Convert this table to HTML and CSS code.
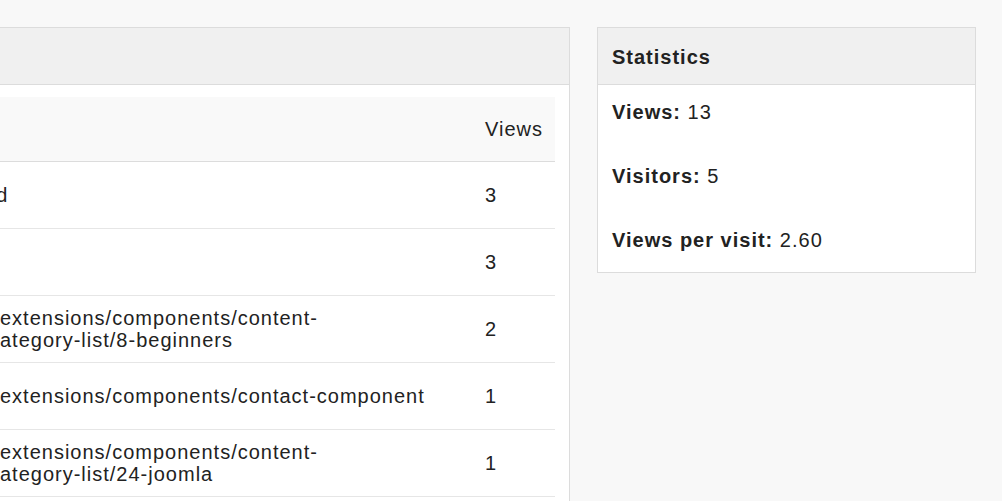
FILE: index.html
```html
<!DOCTYPE html>
<html lang="en">
<head>
<meta charset="utf-8">
<title>Statistics</title>
<link rel="stylesheet" href="styles.css">
</head>
<body>
<div class="layout">
  <section class="panel panel-main">
    <div class="panel-head"></div>
    <div class="panel-body">
      <table class="pages">
        <thead>
          <tr><th class="col-url"></th><th class="col-views">Views</th></tr>
        </thead>
        <tbody>
          <tr><td class="col-url url-end">/getting-started</td><td class="col-views">3</td></tr>
          <tr><td class="col-url">/</td><td class="col-views">3</td></tr>
          <tr><td class="col-url url-indent">extensions/components/content-<br>category-list/8-beginners</td><td class="col-views">2</td></tr>
          <tr><td class="col-url url-indent">extensions/components/contact-component</td><td class="col-views">1</td></tr>
          <tr><td class="col-url url-indent">extensions/components/content-<br>category-list/24-joomla</td><td class="col-views">1</td></tr>
          <tr><td class="col-url url-indent">extensions/components/search-component</td><td class="col-views">1</td></tr>
        </tbody>
      </table>
    </div>
  </section>
  <section class="panel panel-stats">
    <div class="panel-head"><h2 class="panel-title">Statistics</h2></div>
    <div class="panel-body stats-body">
      <p class="stat"><b>Views:</b> 13</p>
      <p class="stat"><b>Visitors:</b> 5</p>
      <p class="stat"><b>Views per visit:</b> 2.60</p>
    </div>
  </section>
</div>
</body>
</html>
```
FILE: styles.css
```css
html, body {
  margin: 0;
  padding: 0;
}
body {
  background: #f8f8f8;
  color: #222;
  font-family: "Liberation Sans", Arial, sans-serif;
  font-size: 20px;
  letter-spacing: 1px;
  overflow: hidden;
}
.layout {
  display: flex;
  align-items: flex-start;
  gap: 27px;
  padding-top: 27px;
}
.panel {
  background: #fff;
  border: 1px solid #dcdcdc;
  flex: none;
}
.panel-main {
  width: 611px;
  margin-left: -41px;
  box-sizing: border-box;
}
.panel-stats {
  width: 379px;
  box-sizing: border-box;
}
.panel-head {
  height: 56px;
  background: #f0f0f0;
  border-bottom: 1px solid #dcdcdc;
  display: flex;
  align-items: center;
  padding: 2px 14px 0;
  box-sizing: border-box;
  height: 57px;
}
.panel-title {
  margin: 0;
  font-size: 20px;
  font-weight: bold;
  line-height: 24px;
}
.panel-main .panel-body {
  padding: 12px 14px 0 14px;
}
.pages {
  width: 100%;
  border-collapse: separate;
  border-spacing: 0;
}
.pages th,
.pages td {
  box-sizing: border-box;
  padding: 0 15px;
  height: 67px;
  line-height: 22px;
  text-align: left;
  vertical-align: middle;
  font-weight: normal;
  border-bottom: 1px solid #e6e6e6;
  white-space: nowrap;
}
.pages thead th {
  background: #f9f9f9;
  height: 65px;
  border-bottom-color: #dcdcdc;
}
.pages .col-views {
  width: 85px;
  padding: 0 10px 0 15px;
}
.url-indent {
  text-indent: 11px;
}
.url-end {
  text-indent: -130px;
}
.stats-body {
  display: flex;
  flex-direction: column;
  gap: 40px;
  padding: 15px 14px 20px;
}
.stat {
  margin: 0;
  line-height: 24px;
}
.stat b {
  font-weight: bold;
}
```
